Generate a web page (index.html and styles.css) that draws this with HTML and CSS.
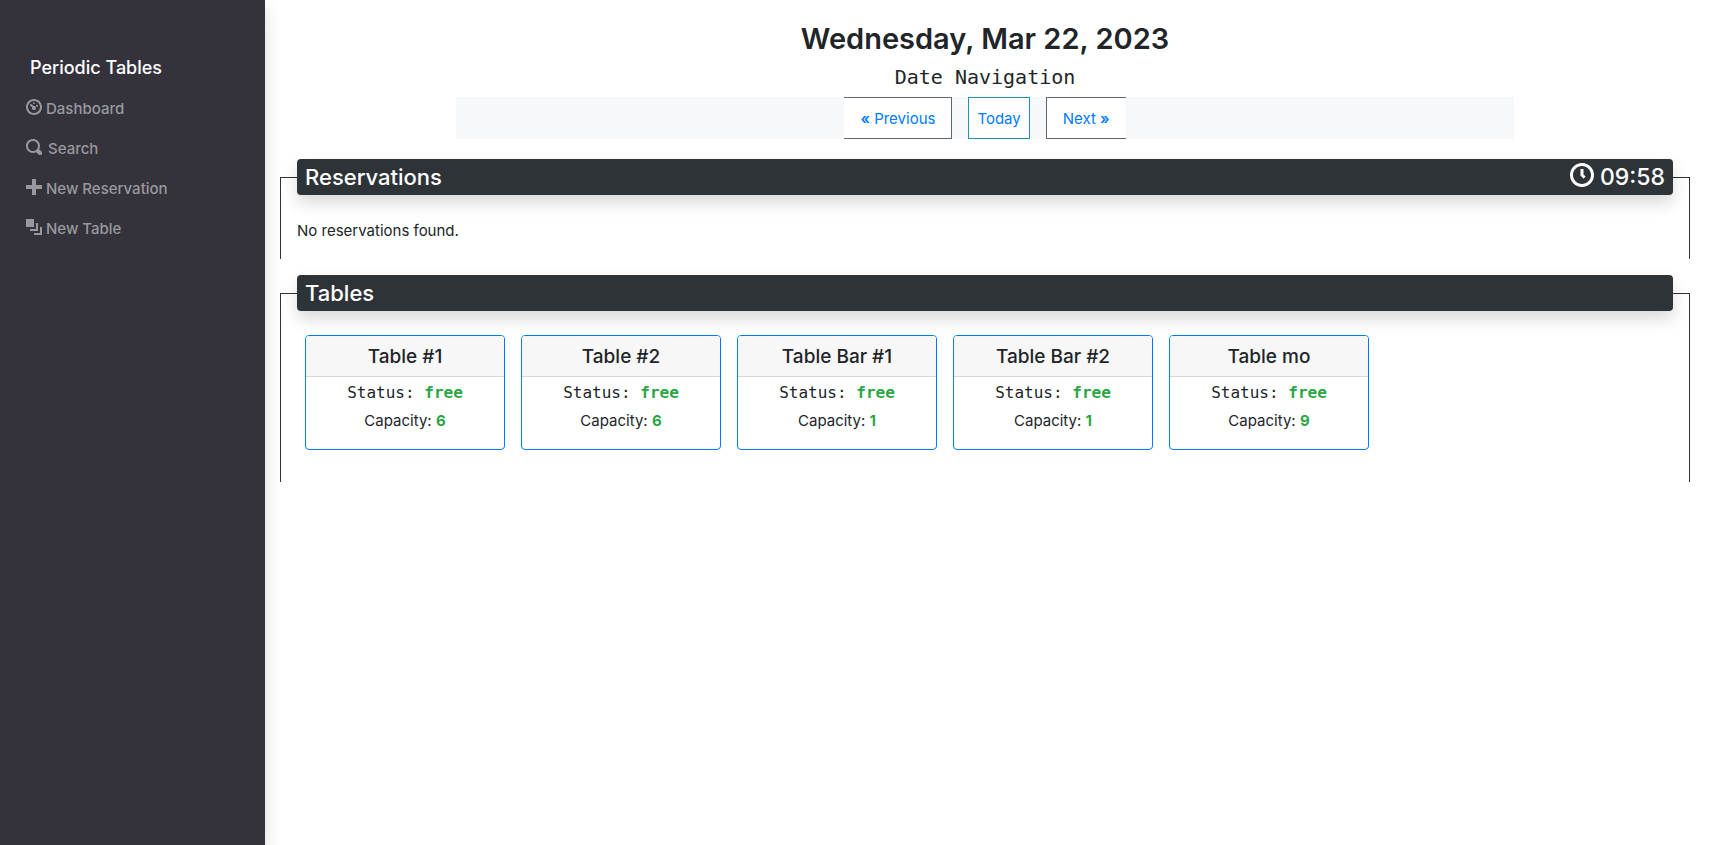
FILE: index.html
```html
<!DOCTYPE html>
<html lang="en">
<head>
<meta charset="utf-8">
<meta name="viewport" content="width=device-width, initial-scale=1">
<title>Periodic Tables</title>
<link rel="stylesheet" href="styles.css">
</head>
<body>
<div class="layout">
  <nav class="sidebar" aria-label="Main">
    <a class="brand" href="#">Periodic Tables</a>
    <ul class="menu">
      <li><a class="menu-link" href="#"><svg class="icon" viewBox="0 0 8 8" aria-hidden="true"><path d="M4 0c-2.2 0-4 1.8-4 4s1.8 4 4 4 4-1.8 4-4-1.8-4-4-4zm0 1c1.66 0 3 1.34 3 3s-1.34 3-3 3-3-1.34-3-3 1.34-3 3-3z" fill-rule="evenodd"/><circle cx="4" cy="2.1" r=".45"/><circle cx="5.5" cy="3.4" r=".5"/><path d="M2.4 2.5a.5.5 0 0 0-.25.85l.9.9a1 1 0 1 0 .7-.7l-.9-.9a.5.5 0 0 0-.45-.15z"/></svg>Dashboard</a></li>
      <li><a class="menu-link menu-link-wide" href="#"><svg class="icon" viewBox="0 0 8 8" aria-hidden="true"><path d="M3.5 0c-1.93 0-3.5 1.57-3.5 3.5s1.57 3.5 3.5 3.5c.59 0 1.17-.14 1.66-.41a1 1 0 0 0 .13.13l1 1a1.02 1.02 0 1 0 1.44-1.44l-1-1a1 1 0 0 0-.16-.13c.27-.49.44-1.06.44-1.66 0-1.93-1.55-3.5-3.5-3.5zm0 1c1.39 0 2.5 1.11 2.5 2.5 0 .66-.24 1.27-.66 1.72l-.03.03a1 1 0 0 0-.13.13c-.44.4-1.04.63-1.69.63-1.39 0-2.5-1.11-2.5-2.5s1.11-2.5 2.5-2.5z"/></svg>Search</a></li>
      <li><a class="menu-link" href="#"><svg class="icon" viewBox="0 0 8 8" aria-hidden="true"><path d="M3 0v3h-3v2h3v3h2v-3h3v-2h-3v-3h-2z"/></svg>New Reservation</a></li>
      <li><a class="menu-link" href="#"><svg class="icon" viewBox="0 0 8 8" aria-hidden="true"><path d="M0 0v4h4v-4h-4zm5 2v3h-3v1h4v-4h-1zm2 2v3h-3v1h4v-4h-1z"/></svg>New Table</a></li>
    </ul>
  </nav>
  <main class="content">
    <h1 class="date">Wednesday, Mar 22, 2023</h1>
    <p class="subtitle">Date Navigation</p>
    <nav class="pager" aria-label="Date Navigation">
      <a class="page page-prev" href="#"><span class="mark">«</span> Previous</a>
      <a class="page page-today" href="#">Today</a>
      <a class="page page-next" href="#">Next <span class="mark">»</span></a>
    </nav>
    <fieldset class="panel">
      <legend class="panel-title"><span class="panel-title-row"><span>Reservations</span><span class="time"><svg class="clock" viewBox="0 0 8 8" aria-hidden="true"><path d="M4 0c-2.2 0-4 1.8-4 4s1.8 4 4 4 4-1.8 4-4-1.8-4-4-4zm0 1c1.66 0 3 1.34 3 3s-1.34 3-3 3-3-1.34-3-3 1.34-3 3-3zm-.5 1v2.22l.16.13.5.5.34.38.72-.72-.38-.34-.34-.34v-1.81h-1z"/></svg>09:58</span></span></legend>
      <p class="empty">No reservations found.</p>
    </fieldset>
    <fieldset class="panel">
      <legend class="panel-title">Tables</legend>
      <div class="cards">
        <article class="card"><h2 class="card-title">Table #1</h2><div class="card-body"><p class="status">Status: <strong>free</strong></p><p>Capacity: <strong>6</strong></p></div></article>
        <article class="card"><h2 class="card-title">Table #2</h2><div class="card-body"><p class="status">Status: <strong>free</strong></p><p>Capacity: <strong>6</strong></p></div></article>
        <article class="card"><h2 class="card-title">Table Bar #1</h2><div class="card-body"><p class="status">Status: <strong>free</strong></p><p>Capacity: <strong>1</strong></p></div></article>
        <article class="card"><h2 class="card-title">Table Bar #2</h2><div class="card-body"><p class="status">Status: <strong>free</strong></p><p>Capacity: <strong>1</strong></p></div></article>
        <article class="card"><h2 class="card-title">Table mo</h2><div class="card-body"><p class="status">Status: <strong>free</strong></p><p>Capacity: <strong>9</strong></p></div></article>
      </div>
    </fieldset>
  </main>
</div>
</body>
</html>
```
FILE: styles.css
```css
* { box-sizing: border-box; }
body {
  margin: 0;
  background: #fff;
  color: #212529;
  font-family: Inter, "Liberation Sans", sans-serif;
  font-size: 15px;
  line-height: 24px;
}
h1, h2, p, ul { margin: 0; padding: 0; }
a { color: #007bff; text-decoration: none; }

.layout { display: flex; min-height: 100vh; }
.sidebar {
  flex: 0 0 265px;
  padding: 53px 26px 16px;
  background: #34333c;
  box-shadow: 0 8px 16px rgba(0, 0, 0, .15);
}
.brand {
  display: block;
  padding: 0 4px;
  margin-bottom: 6px;
  color: #fff;
  font-size: 18px;
  font-weight: 500;
  line-height: 30px;
}
.menu { list-style: none; }
.menu-link {
  display: flex;
  align-items: center;
  gap: 4px;
  padding: 8px 0;
  color: #99999d;
  font-weight: 500;
}
.menu-link-wide { gap: 6px; }
.icon { width: 16px; height: 16px; margin-bottom: 4px; fill: currentColor; }

.content { flex: 1; min-width: 0; padding: 20px 33px 16px 15px; }
.date { margin-bottom: 7px; font-size: 29px; font-weight: 600; line-height: 38px; text-align: center; }
.subtitle { margin-bottom: 8px; font-family: "DejaVu Sans Mono", monospace; font-size: 20px; text-align: center; }
.pager {
  display: flex;
  justify-content: center;
  gap: 16px;
  width: 75%;
  margin: 0 auto 20px;
  background: #f6f8fa;
}
.page { padding: 9px 16px 7px; border: 1px solid #5f6871; background: #fff; }
.page-prev { border-left: 0; }
.page-next { border-right: 0; }
.page-today { padding: 9px 8px 7px; border-color: #1797a9; }
.mark { font-weight: 600; }

.panel {
  min-width: 0;
  margin: 0 0 16px;
  padding: 0 16px 16px;
  border: 1px solid #2e3337;
  border-bottom: 0;
}
.panel-title {
  width: 100%;
  margin-bottom: 24px;
  padding: 0 8px;
  border-radius: 4px;
  background: #2e3337;
  box-shadow: 0 8px 16px rgba(0, 0, 0, .15);
  color: #fff;
  font-size: 22px;
  font-weight: 500;
  line-height: 36px;
}
.panel-title-row { display: flex; justify-content: space-between; }
.time { display: flex; align-items: center; gap: 6px; font-size: 23px; }
.clock { width: 24px; height: 24px; margin-bottom: 4px; fill: currentColor; }
.cards { display: flex; flex-wrap: wrap; gap: 16px; padding: 0 8px 16px; }
.card {
  width: 200px;
  overflow: hidden;
  border: 1px solid #007bff;
  border-radius: 4px;
  text-align: center;
}
.card-title {
  padding: 9px 8px 7px;
  border-bottom: 1px solid #d8d8d8;
  background: #f7f7f7;
  font-size: 19px;
  font-weight: 500;
  line-height: 24px;
}
.card-body { display: grid; gap: 4px; padding: 4px 8px 16px; }
.card-body strong { color: #28a745; font-weight: 700; }
.status { font-family: "DejaVu Sans Mono", monospace; font-size: 16px; }
```
